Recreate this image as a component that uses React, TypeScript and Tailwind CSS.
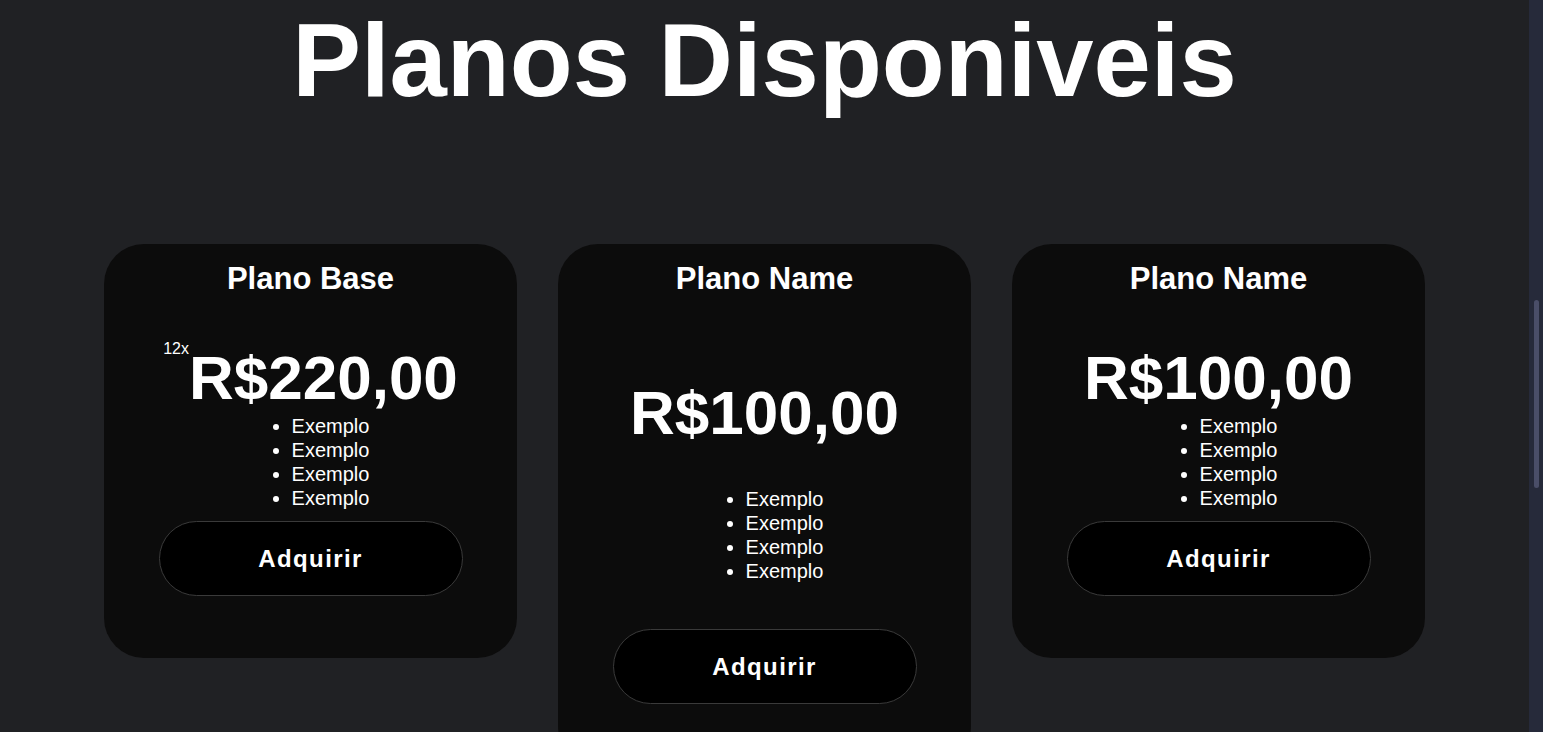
const features = ["Exemplo", "Exemplo", "Exemplo", "Exemplo"];

interface PlanCardProps {
  name: string;
  price: string;
  installments?: string;
  featured?: boolean;
}

function PlanCard({ name, price, installments, featured }: PlanCardProps) {
  return (
    <div className="w-[413px] shrink-0 rounded-[40px] bg-[#0c0c0c] pt-[17px] pb-[62px] flex flex-col items-center">
      <h2 className="text-[31px] leading-[35px] font-bold text-white">{name}</h2>

      {/* price, with the optional "12x" sitting like a superscript */}
      <div className={`flex items-start justify-center ${featured ? "mt-[80px]" : "mt-[45px]"}`}>
        {installments && (
          <span className="text-[16px] leading-none text-white">{installments}</span>
        )}
        <span className="text-[62px] leading-[73px] font-bold text-white">{price}</span>
      </div>

      <ul className={`list-disc pl-10 w-fit text-[20px] leading-[24px] text-white ${featured ? "mt-[38px]" : ""}`}>
        {features.map((item, i) => (
          <li key={i}>{item}</li>
        ))}
      </ul>

      <button
        className={`w-[304px] h-[75px] rounded-full bg-black border border-[#3a3a3a] text-[24px] font-bold tracking-[1.4px] text-white ${
          featured ? "mt-[46px]" : "mt-[11px]"
        }`}
      >
        Adquirir
      </button>
    </div>
  );
}

export default function App() {
  return (
    <div className="flex h-screen overflow-hidden bg-[#202124] font-['Liberation_Sans',Arial,sans-serif]">
      <section className="flex-1 pt-[9px] pb-[40px] flex flex-col items-center">
        <h1 className="text-[103px] leading-[104px] font-bold text-white">Planos Disponiveis</h1>

        <div className="mt-[131px] flex items-start justify-center gap-[41px]">
          <PlanCard name="Plano Base" price="R$220,00" installments="12x" />
          <PlanCard name="Plano Name" price="R$100,00" featured />
          <PlanCard name="Plano Name" price="R$100,00" />
        </div>
      </section>

      {/* page scrollbar */}
      <aside className="w-[14px] shrink-0 bg-[#262a3a] flex justify-center">
        <div className="mt-[300px] w-[5px] h-[188px] rounded-full bg-[#4a4e68]" />
      </aside>
    </div>
  );
}
